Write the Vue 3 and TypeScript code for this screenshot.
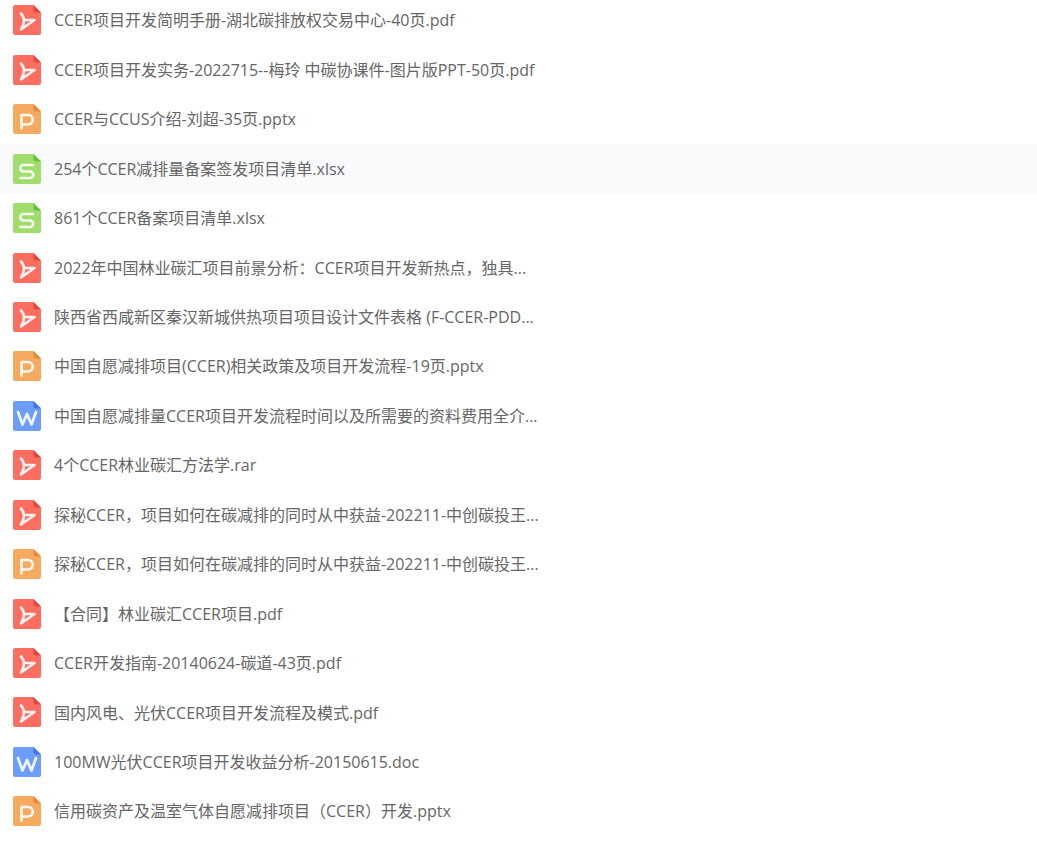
<script setup lang="ts">
type Kind = 'pdf' | 'ppt' | 'xls' | 'doc'
interface Row { name: string; kind: Kind; hover?: boolean }
const rows: Row[] = [
  { name: 'CCER项目开发简明手册-湖北碳排放权交易中心-40页.pdf', kind: 'pdf' },
  { name: 'CCER项目开发实务-2022715--梅玲 中碳协课件-图片版PPT-50页.pdf', kind: 'pdf' },
  { name: 'CCER与CCUS介绍-刘超-35页.pptx', kind: 'ppt' },
  { name: '254个CCER减排量备案签发项目清单.xlsx', kind: 'xls', hover: true },
  { name: '861个CCER备案项目清单.xlsx', kind: 'xls' },
  { name: '2022年中国林业碳汇项目前景分析：CCER项目开发新热点，独具...', kind: 'pdf' },
  { name: '陕西省西咸新区秦汉新城供热项目项目设计文件表格 (F-CCER-PDD...', kind: 'pdf' },
  { name: '中国自愿减排项目(CCER)相关政策及项目开发流程-19页.pptx', kind: 'ppt' },
  { name: '中国自愿减排量CCER项目开发流程时间以及所需要的资料费用全介...', kind: 'doc' },
  { name: '4个CCER林业碳汇方法学.rar', kind: 'pdf' },
  { name: '探秘CCER，项目如何在碳减排的同时从中获益-202211-中创碳投王...', kind: 'pdf' },
  { name: '探秘CCER，项目如何在碳减排的同时从中获益-202211-中创碳投王...', kind: 'ppt' },
  { name: '【合同】林业碳汇CCER项目.pdf', kind: 'pdf' },
  { name: 'CCER开发指南-20140624-碳道-43页.pdf', kind: 'pdf' },
  { name: '国内风电、光伏CCER项目开发流程及模式.pdf', kind: 'pdf' },
  { name: '100MW光伏CCER项目开发收益分析-20150615.doc', kind: 'doc' },
  { name: '信用碳资产及温室气体自愿减排项目（CCER）开发.pptx', kind: 'ppt' },
]
const colors: Record<Kind, [string, string]> = {
  pdf: ['#fd6e60', '#e2483c'],
  ppt: ['#f5aa60', '#e58a35'],
  xls: ['#a0dd6c', '#62c23a'],
  doc: ['#6c9dfb', '#3f76e8'],
}
</script>

<template>
  <div class="list">
    <div v-for="(r, i) in rows" :key="i" class="row" :class="{ hover: r.hover }">
      <svg class="icon" width="28" height="30" viewBox="0 0 28 30">
        <path d="M2 0H20.5L28 7.5V28a2 2 0 0 1-2 2H2a2 2 0 0 1-2-2V2a2 2 0 0 1 2-2Z" :fill="colors[r.kind][0]" />
        <path d="M20.5 0L28 7.5H22.5a2 2 0 0 1-2-2Z" :fill="colors[r.kind][1]" />
        <g fill="none" stroke="#fff" stroke-opacity=".9" stroke-width="2.7" stroke-linecap="round" stroke-linejoin="round">
          <path v-if="r.kind === 'pdf'" d="M8 8.5Q11 12 11 15Q11 20 8 24.5L21.5 15H11" />
          <path v-else-if="r.kind === 'ppt'" d="M8.5 24.5V11H15a4.75 4.75 0 0 1 0 9.5H8.5" />
          <path v-else-if="r.kind === 'xls'" d="M20 11H10.5a3.25 3.25 0 0 0 0 6.5H17a3.25 3.25 0 0 1 0 6.5H7.5" />
          <path v-else d="M5 11L9.5 23.5L14 13L18.5 23.5L23 11" />
        </g>
      </svg>
      <span class="name">{{ r.name }}</span>
    </div>
  </div>
</template>

<style scoped>
.list {
  margin-top: -4.4px;
  width: 1037px;
  height: 847px;
  overflow: hidden;
  font-family: "Open Sans", "Noto Sans CJK SC", sans-serif;
}
.row {
  height: 49.44px;
  display: flex;
  align-items: center;
  gap: 13px;
  padding-left: 13px;
}
.row.hover { background: #f8fafc; }
.icon { flex: none; }
.name {
  font-size: 16px;
  color: #666;
  white-space: nowrap;
  padding-bottom: 1.8px;
}
</style>
<style>
html, body { background: #fff; overflow: hidden; }
</style>
